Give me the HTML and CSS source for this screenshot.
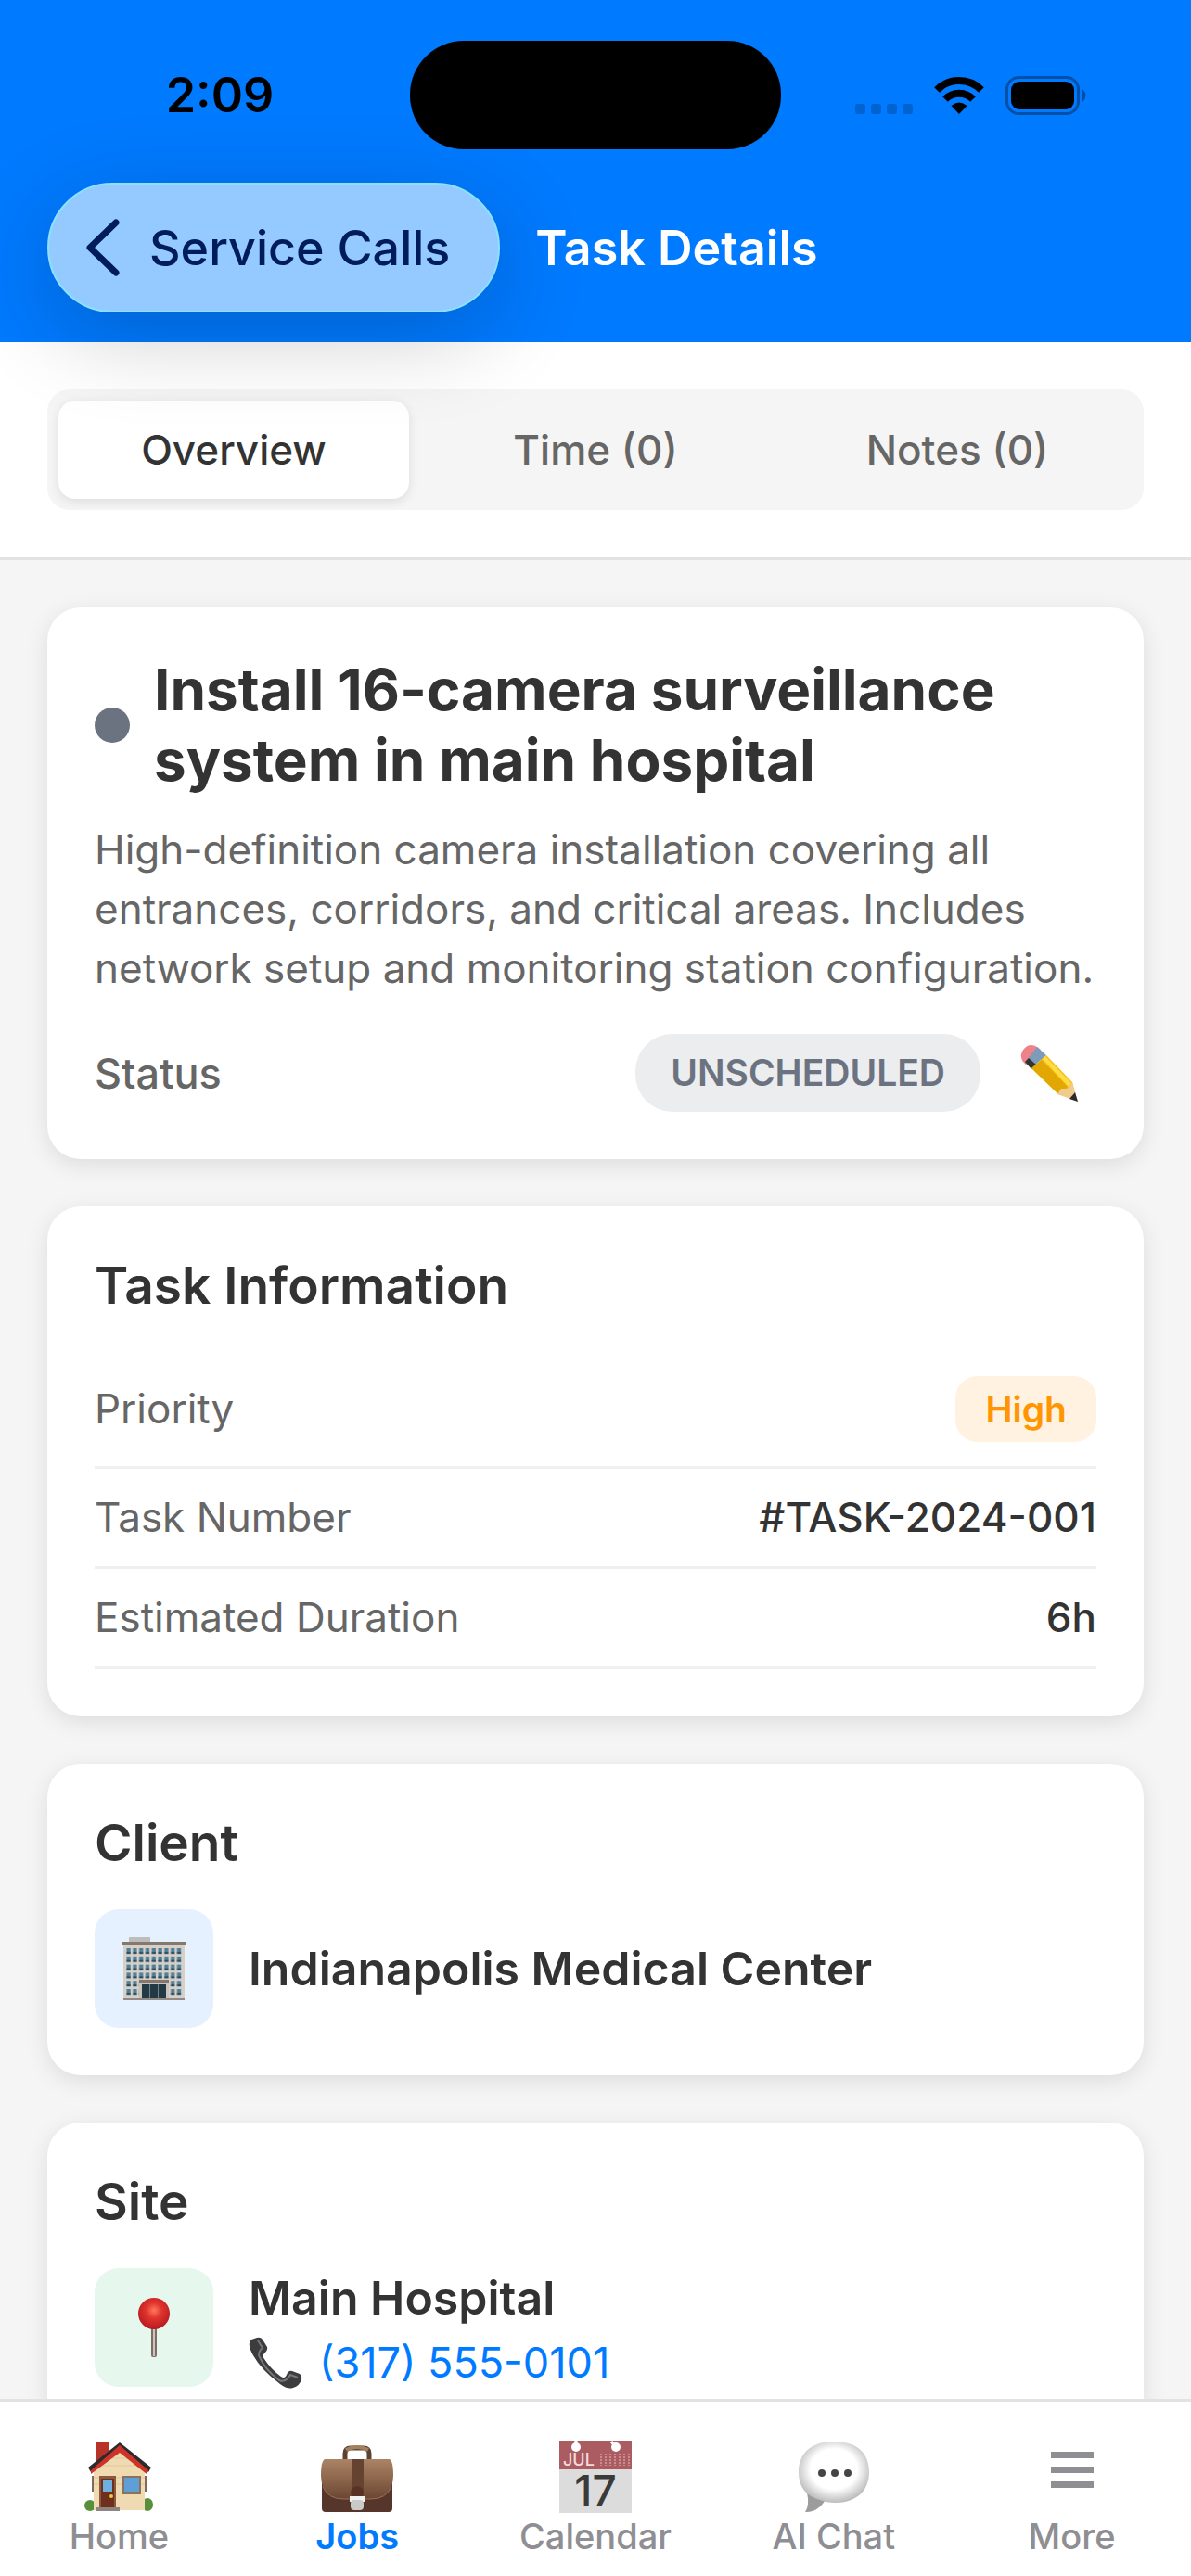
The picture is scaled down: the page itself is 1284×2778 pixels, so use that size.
FILE: index.html
```html
<!DOCTYPE html>
<html lang="en">
<head>
    <meta charset="UTF-8">
    <meta name="viewport" content="width=device-width, initial-scale=1.0">
    <title>Task Details</title>
    <link rel="stylesheet" href="styles.css">
</head>
<body>
    <header class="header">
        <div class="status-bar">
            <span class="time">2:09</span>
            <span class="island"></span>
            <div class="status-icons">
                <svg width="62" height="50" viewBox="0 0 62 50" fill="#0063cf" aria-hidden="true">
                    <rect x="0" y="34" width="11" height="11" rx="3"/>
                    <rect x="17" y="34" width="11" height="11" rx="3"/>
                    <rect x="34" y="34" width="11" height="11" rx="3"/>
                    <rect x="51" y="34" width="11" height="11" rx="3"/>
                </svg>
                <svg width="54" height="40" viewBox="0 0 54 40" fill="none" stroke="#000" stroke-width="8" aria-hidden="true">
                    <path d="M3 14 A34 34 0 0 1 51 14"/>
                    <path d="M12 24 A21 21 0 0 1 42 24"/>
                    <path d="M18.500 31 Q27 24 35.500 31 L27 40 Z" fill="#000" stroke="none"/>
                </svg>
                <svg width="88" height="42" viewBox="0 0 88 42" aria-hidden="true">
                    <rect x="1.500" y="1.500" width="77" height="39" rx="13" fill="none" stroke="#0050a8" stroke-width="3"/>
                    <rect x="6" y="6" width="68" height="30" rx="9" fill="#000"/>
                    <path d="M83 14 Q90 21 83 28 Z" fill="#0050a8"/>
                </svg>
            </div>
        </div>
        <nav class="nav-bar">
            <a class="back" href="#">
                <svg width="36" height="62" viewBox="0 0 36 62" aria-hidden="true">
                    <path d="M32 4 L4 31 L32 58" fill="none" stroke="#001c5a" stroke-width="7" stroke-linecap="round" stroke-linejoin="round"/>
                </svg>
                Service Calls
            </a>
            <h1>Task Details</h1>
        </nav>
    </header>

    <div class="tabs-panel">
        <div class="tabs">
            <button class="tab active">Overview</button>
            <button class="tab">Time (0)</button>
            <button class="tab">Notes (0)</button>
        </div>
    </div>

    <main class="content">
        <section class="card">
            <div class="task-header">
                <span class="dot"></span>
                <h2>Install 16-camera surveillance system in main hospital</h2>
            </div>
            <p class="description">High-definition camera installation covering all entrances, corridors, and critical areas. Includes network setup and monitoring station configuration.</p>
            <div class="status-row">
                <span class="status-label">Status</span>
                <span class="status-badge">UNSCHEDULED</span>
                <button class="edit" aria-label="Edit status">
                    <svg width="62" height="62" viewBox="0 0 62 62" aria-hidden="true">
                        <path d="M3 19 Q-2 11 4 5 Q10 -2 18 3 L22 6 L6 22 Z" fill="#ee8288"/>
                        <path d="M18 3 L28 12 L12 26 L5 20 Z" fill="#7d9cba"/>
                        <path d="M5 19 L9 15 L17 22 L12 27 Z" fill="#333"/>
                        <path d="M28 12 L56 41 L58 50 L50 55 L40 53 L12 26 Z" fill="#f5bf0c"/>
                        <path d="M23 17 L51 46 L41 54 L12 26 Z" fill="#e3a703"/>
                        <path d="M24 16 L27 13 L55 42 L52 46 Z" fill="#ffdb45"/>
                        <path d="M56 41 L62 62 L40 54 L44 48 L51 48 Z" fill="#efcb8d"/>
                        <path d="M59 52 L62 62 L53 59 Z" fill="#2b2b2b"/>
                    </svg>
                </button>
            </div>
        </section>

        <section class="card">
            <h3>Task Information</h3>
            <dl class="info">
                <div class="info-row">
                    <dt>Priority</dt>
                    <dd class="priority">High</dd>
                </div>
                <div class="info-row">
                    <dt>Task Number</dt>
                    <dd>#TASK-2024-001</dd>
                </div>
                <div class="info-row">
                    <dt>Estimated Duration</dt>
                    <dd>6h</dd>
                </div>
            </dl>
        </section>

        <section class="card">
            <h3>Client</h3>
            <div class="contact">
                <span class="icon-box">
                    <svg width="68" height="68" viewBox="0 0 68 68" aria-hidden="true">
                        <defs>
                            <pattern id="windows" x="4" y="12" width="6.800" height="8.800" patternUnits="userSpaceOnUse">
                                <rect x="0.500" y="0" width="4.200" height="6" fill="#4d7f98"/>
                                <rect x="0.500" y="4" width="4.200" height="2" fill="#2c4a5c"/>
                            </pattern>
                        </defs>
                        <rect x="7" y="0" width="23" height="6" fill="#bdbdbb"/>
                        <rect x="1" y="6" width="66" height="61" fill="#d6d0c9"/>
                        <rect x="0" y="5" width="68" height="3" fill="#83796f"/>
                        <rect x="4" y="12" width="60" height="51" fill="url(#windows)"/>
                        <rect x="18" y="46" width="32" height="21" fill="#cbc4bc"/>
                        <rect x="18" y="46" width="32" height="4" fill="#85776f"/>
                        <rect x="21" y="51" width="26" height="16" fill="#213a44"/>
                        <path d="M29.500 51 V67 M38.500 51 V67" stroke="#71848a"/>
                        <rect x="1" y="66" width="66" height="2" fill="#8f8a85"/>
                    </svg>
                </span>
                <p class="contact-name">Indianapolis Medical Center</p>
            </div>
        </section>

        <section class="card">
            <h3>Site</h3>
            <div class="contact site">
                <span class="icon-box green">
                    <svg width="36" height="66" viewBox="0 0 36 66" aria-hidden="true">
                        <defs>
                            <radialGradient id="pin" cx="0.500" cy="0.400" r="0.600">
                                <stop offset="0" stop-color="#ff7a5c"/>
                                <stop offset="0.400" stop-color="#e2352e"/>
                                <stop offset="1" stop-color="#b51a20"/>
                            </radialGradient>
                        </defs>
                        <rect x="15" y="30" width="6" height="35" rx="2" fill="#7d6f67"/>
                        <rect x="17" y="34" width="2" height="30" fill="#cfc4bc"/>
                        <circle cx="18" cy="18" r="17" fill="url(#pin)"/>
                    </svg>
                </span>
                <div>
                    <p class="contact-name">Main Hospital</p>
                    <a class="phone" href="tel:+13175550101">
                        <svg width="58" height="56" viewBox="0 0 58 56" aria-hidden="true">
                            <path d="M9 1 Q13 0 15 3 L20 11 Q21 15 17 18 Q14 20 17 24 Q24 35 35 43 Q39 46 41 41 Q43 36 47 37 L55 40 Q58 42 57 46 Q55 53 48 55 Q42 57 34 51 Q10 33 2 14 Q-1 6 3 3 Z" fill="#3c3c3e"/>
                            <path d="M10 4 L15 12 Q11 15 11 20 Q17 35 33 47 Q40 50 45 41 L53 44" fill="none" stroke="#77777a" stroke-width="2"/>
                        </svg>
                        (317) 555-0101
                    </a>
                </div>
            </div>
        </section>
    </main>

    <nav class="tab-bar">
        <a class="tab-item" href="#">
            <svg width="78" height="78" viewBox="0 0 78 78" aria-hidden="true">
                <ellipse cx="8" cy="70" rx="6" ry="6" fill="#57903a"/>
                <ellipse cx="70" cy="69" rx="6" ry="7" fill="#57903a"/>
                <rect x="14" y="2" width="14" height="30" fill="#b93227"/>
                <path d="M12 33 L40 6 L67 33 V75 H12 Z" fill="#efdab2"/>
                <path d="M12 40 H67 M12 47 H67 M22 27 H57 M30 19 H49" stroke="#dfc799"/>
                <path d="M6 29 L40 2 L74 29 L71 34 L40 9 L9 34 Z" fill="#2c2a2b"/>
                <path d="M9 32 L40 5 L71 32 L69 36 L40 13 L9 36 Z" fill="#cf3328"/>
                <rect x="18" y="38" width="18" height="36" fill="#8b5a3c"/>
                <rect x="20" y="41" width="14" height="33" fill="#6e2f1d"/>
                <rect x="22" y="43" width="10" height="12" fill="#6fb0e0"/>
                <circle cx="31" cy="60" r="2" fill="#f4c83b"/>
                <rect x="43" y="38" width="20" height="20" fill="#8a735a"/>
                <rect x="45" y="40" width="16" height="15" fill="#5d9fd6"/>
                <rect x="10" y="38" width="2" height="17" fill="#80695c"/>
                <rect x="67" y="38" width="3" height="17" fill="#80695c"/>
                <rect x="14" y="72" width="26" height="4" fill="#8e8580"/>
            </svg>
            Home
        </a>
        <a class="tab-item active" href="#">
            <svg width="78" height="78" viewBox="0 0 78 78" aria-hidden="true">
                <defs>
                    <linearGradient id="leather" x1="0" y1="0" x2="0" y2="1">
                        <stop offset="0" stop-color="#ab8465"/>
                        <stop offset="1" stop-color="#6d4632"/>
                    </linearGradient>
                </defs>
                <path d="M26 21 V14 Q26 8 32 8 H46 Q52 8 52 14 V21" fill="none" stroke="#5b4233" stroke-width="5"/>
                <path d="M27 10 Q39 4 51 10" fill="none" stroke="#a5805f" stroke-width="4"/>
                <rect x="1" y="24" width="76" height="53" rx="4" fill="#56352a"/>
                <path d="M4 20 H74 Q78 22 78 38 Q77 63 54 63 H24 Q1 63 0 38 Q0 22 4 20 Z" fill="url(#leather)"/>
                <path d="M2 50 Q8 63 24 63 H54 Q70 63 76 50" fill="none" stroke="#97705a" stroke-width="1"/>
                <rect x="33" y="20" width="13" height="38" fill="#654330"/>
                <circle cx="39" cy="56" r="7" fill="#5a3225"/>
                <rect x="31" y="60" width="16" height="6" fill="#f0f0ee"/>
                <rect x="32" y="64" width="14" height="11" rx="4" fill="#c9c9c7"/>
            </svg>
            Jobs
        </a>
        <a class="tab-item" href="#">
            <svg class="calendar" width="78" height="78" viewBox="0 0 78 78" aria-hidden="true">
                <rect x="0" y="0" width="78" height="78" fill="#dcdcdc"/>
                <rect x="0" y="0" width="78" height="31" fill="#ab5c60"/>
                <circle cx="18" cy="7" r="5" fill="#fff"/>
                <circle cx="61" cy="7" r="5" fill="#fff"/>
                <path d="M18 0 V7 M56 1 L61 7" stroke="#fff" stroke-width="3"/>
                <path d="M45 14 V27 M50 14 V27 M55 14 V27 M60 14 V27 M65 14 V27 M70 14 V27 M75 14 V27" stroke="#c98d8f" stroke-width="2" stroke-dasharray="2 1"/>
                <text class="calendar-month" x="4" y="27">JUL</text>
                <text class="calendar-day" x="39" y="71">17</text>
            </svg>
            Calendar
        </a>
        <a class="tab-item" href="#">
            <svg width="78" height="78" viewBox="0 0 78 78" aria-hidden="true">
                <defs>
                    <radialGradient id="bubble" cx="0.500" cy="0.450" r="0.550">
                        <stop offset="0.600" stop-color="#fff"/>
                        <stop offset="1" stop-color="#bcbcbc"/>
                    </radialGradient>
                </defs>
                <path d="M10 56 Q13 70 8 77 Q22 78 31 62 Z" fill="#9c9c9c"/>
                <path d="M39 1 C66 1 77 15 77 34 C77 55 62 67 41 67 C34 67 28 66 24 64 C9 60 1 50 1 34 C1 14 14 1 39 1 Z" fill="url(#bubble)"/>
                <circle cx="26" cy="35" r="4" fill="#454545"/>
                <circle cx="40" cy="35" r="4" fill="#454545"/>
                <circle cx="54" cy="35" r="4" fill="#454545"/>
            </svg>
            AI Chat
        </a>
        <a class="tab-item" href="#">
            <svg width="78" height="78" viewBox="0 0 78 78" fill="#8e8e93" aria-hidden="true">
                <rect x="16" y="12" width="46" height="7"/>
                <rect x="16" y="28" width="46" height="7"/>
                <rect x="16" y="44" width="46" height="7"/>
            </svg>
            More
        </a>
    </nav>
</body>
</html>
```
FILE: styles.css
```css
* {
    box-sizing: border-box;
}
body {
    font-family: Inter, "Liberation Sans", sans-serif;
    background-color: #f5f5f5;
    color: #333;
    margin: 0;
    height: 100vh;
    display: flex;
    flex-direction: column;
    overflow: hidden;
}
h1, h2, h3, p, dl, dd {
    margin: 0;
}
a {
    text-decoration: none;
}
button {
    font-family: inherit;
    border: none;
    cursor: pointer;
}
svg {
    display: block;
    flex-shrink: 0;
}

/* header */
.header {
    position: relative;
    z-index: 1;
    background-color: #007aff;
    padding: 44px 0 32px;
}
.status-bar {
    display: grid;
    grid-template-columns: 1fr 400px 1fr;
    align-items: center;
    justify-items: center;
    padding: 0 32px;
}
.time {
    color: #000;
    font-size: 52px;
    font-weight: 600;
}
.island {
    width: 400px;
    height: 117px;
    border-radius: 58px;
    background-color: #000;
}
.status-icons {
    display: flex;
    align-items: center;
    gap: 23px;
}
.nav-bar {
    display: flex;
    align-items: center;
    gap: 38px;
    padding: 36px 51px 0;
}
.back {
    display: flex;
    align-items: center;
    gap: 32px;
    height: 140px;
    padding: 0 52px 0 40px;
    border: 2px solid #8ee0ff;
    border-radius: 70px;
    background-color: #94caff;
    color: #001c5a;
    font-size: 52px;
    font-weight: 500;
    box-shadow: 0 24px 100px rgba(0, 0, 0, 0.2);
}
.nav-bar h1 {
    color: #fff;
    font-size: 52px;
    font-weight: 600;
}

/* tabs */
.tabs-panel {
    background-color: #fff;
    border-bottom: 3px solid #e2e2e5;
    padding: 51px;
}
.tabs {
    display: flex;
    gap: 12px;
    padding: 12px;
    border-radius: 24px;
    background-color: #f5f5f5;
}
.tab {
    flex: 1;
    height: 106px;
    border-radius: 18px;
    background-color: transparent;
    color: #666;
    font-size: 44px;
    font-weight: 500;
}
.tab.active {
    background-color: #fff;
    color: #333;
    box-shadow: 0 3px 12px rgba(0, 0, 0, 0.1);
}

/* cards */
.content {
    flex: 1;
    min-height: 0;
    overflow: hidden;
    display: flex;
    flex-direction: column;
    gap: 51px;
    padding: 51px;
}
.card {
    flex-shrink: 0;
    padding: 51px;
    border-radius: 36px;
    background-color: #fff;
    box-shadow: 0 6px 24px rgba(0, 0, 0, 0.1);
}
.card h3 {
    font-size: 55px;
    font-weight: 600;
    line-height: 68px;
    margin-bottom: 38px;
}
.task-header {
    display: flex;
    align-items: center;
    gap: 26px;
}
.dot {
    width: 38px;
    height: 38px;
    border-radius: 50%;
    background-color: #6b7280;
    flex-shrink: 0;
}
.task-header h2 {
    font-size: 62px;
    font-weight: 700;
    line-height: 76px;
}
.description {
    color: #666;
    font-size: 44px;
    line-height: 64px;
    margin: 26px 0 39px;
}
.status-row {
    display: flex;
    align-items: center;
}
.status-label {
    flex: 1;
    color: #666;
    font-size: 45px;
    font-weight: 500;
}
.status-badge {
    padding: 0 38px;
    border-radius: 40px;
    background-color: #ebedef;
    color: #6b7280;
    font-size: 39px;
    font-weight: 600;
    line-height: 84px;
}
.edit {
    display: flex;
    margin-left: 23px;
    padding: 0 20px;
    background-color: transparent;
}
.info-row {
    display: flex;
    justify-content: space-between;
    align-items: center;
    padding: 26px 0;
    border-bottom: 3px solid #f0f0f0;
    font-size: 44px;
    line-height: 53px;
}
.info-row dt {
    color: #666;
}
.info-row dd {
    font-weight: 500;
}
.info-row .priority {
    padding: 9px 32px;
    border-radius: 24px;
    background-color: #fff2e0;
    color: #ff9500;
    font-size: 39px;
    font-weight: 600;
}
.contact {
    display: flex;
    align-items: center;
    gap: 38px;
}
.contact.site {
    align-items: flex-start;
}
.icon-box {
    display: flex;
    align-items: center;
    justify-content: center;
    width: 128px;
    height: 128px;
    border-radius: 26px;
    background-color: #e5f1ff;
}
.icon-box.green {
    background-color: #e6f7ed;
}
.contact-name {
    font-size: 50px;
    font-weight: 600;
    line-height: 64px;
}
.phone {
    display: flex;
    align-items: center;
    gap: 18px;
    color: #007aff;
    font-size: 45px;
    line-height: 76px;
}

/* bottom bar */
.tab-bar {
    display: flex;
    height: 191px;
    padding-top: 42px;
    border-top: 3px solid #e2e2e5;
    background-color: #fff;
}
.tab-item {
    flex: 1;
    display: flex;
    flex-direction: column;
    align-items: center;
    gap: 2px;
    color: #8e8e93;
    font-size: 38px;
    font-weight: 500;
    line-height: 46px;
}
.tab-item.active {
    color: #007aff;
    font-weight: 600;
}
.calendar {
    overflow: visible;
}
.calendar-month {
    fill: #f3dcdc;
    font-size: 18px;
}
.calendar-day {
    fill: #3a3a3a;
    font-size: 46px;
    font-weight: 500;
    text-anchor: middle;
}
```
